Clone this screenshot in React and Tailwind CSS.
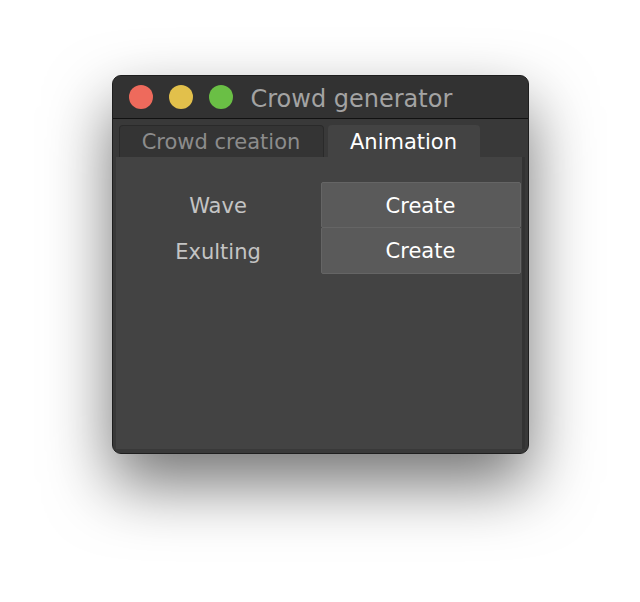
import React from "react";

const font = { fontFamily: '"DejaVu Sans", "Liberation Sans", sans-serif' };

const Light = ({ color }) => (
  <span className={`block w-[24px] h-[24px] rounded-full ${color}`} />
);

const Row = ({ label, top }) => (
  <div className="flex items-stretch h-[46px]">
    <div className="w-[205px] flex items-center justify-center pt-[3px] text-[21px] text-[#c4c4c4]">
      {label}
    </div>
    <button
      className={`w-[200px] flex items-center justify-center pt-[3px] bg-[#5a5a5a] border border-[#656565] rounded-[2px] text-[21px] text-white ${
        top ? "" : "-mt-px"
      }`}
    >
      Create
    </button>
  </div>
);

export default function App() {
  return (
    <div className="w-[640px] h-[602px] bg-white pt-[75px]" style={font}>
      <div className="mx-auto w-[417px] h-[379px] rounded-[9px] bg-[#2f2f2f] border border-[#1e1e1e] shadow-[0_30px_65px_rgba(0,0,0,0.55)] flex flex-col overflow-hidden">
        {/* title bar */}
        <div className="h-[43px] flex items-center pl-[16px] gap-[16px] bg-[#323232] border-b border-[#111]">
          <Light color="bg-[#ee6a5c]" />
          <Light color="bg-[#e2c04b]" />
          <Light color="bg-[#6abf45]" />
          <span className="ml-[2px] mt-[3px] text-[24px] text-[#a3a3a3] leading-none">
            Crowd generator
          </span>
        </div>

        {/* tabs + panel */}
        <div className="flex-1 flex flex-col bg-[#393939] px-[3px] pb-[4px]">
          <div className="h-[38px] flex items-end gap-[4px] pl-[3px] pt-[6px]">
            <div className="w-[205px] h-full flex items-center justify-center pt-[3px] rounded-t-[4px] bg-[#343434] border border-b-0 border-[#2a2a2a] text-[21px] text-[#8c8c8c]">
              Crowd creation
            </div>
            <div className="w-[152px] h-full flex items-center justify-center pt-[3px] rounded-t-[4px] bg-[#434343] text-[21px] text-white">
              Animation
            </div>
          </div>
          <div className="flex-1 bg-[#434343] border-r-[3px] border-[#333] pt-[25px]">
            <Row label="Wave" top />
            <Row label="Exulting" />
          </div>
        </div>
      </div>
    </div>
  );
}
